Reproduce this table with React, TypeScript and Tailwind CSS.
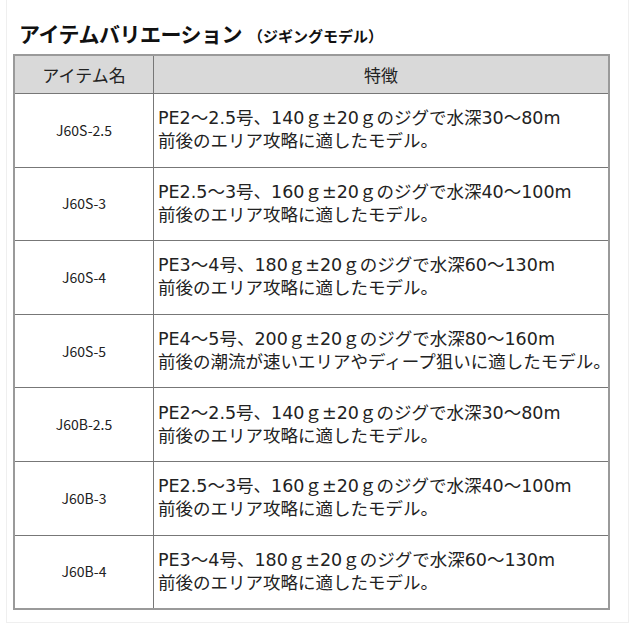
const rows = [
  { name: "J60S-2.5", l1: "PE2～2.5号、140ｇ±20ｇのジグで水深30～80m", l2: "前後のエリア攻略に適したモデル。" },
  { name: "J60S-3", l1: "PE2.5～3号、160ｇ±20ｇのジグで水深40～100m", l2: "前後のエリア攻略に適したモデル。" },
  { name: "J60S-4", l1: "PE3～4号、180ｇ±20ｇのジグで水深60～130m", l2: "前後のエリア攻略に適したモデル。" },
  { name: "J60S-5", l1: "PE4～5号、200ｇ±20ｇのジグで水深80～160m", l2: "前後の潮流が速いエリアやディープ狙いに適したモデル。" },
  { name: "J60B-2.5", l1: "PE2～2.5号、140ｇ±20ｇのジグで水深30～80m", l2: "前後のエリア攻略に適したモデル。" },
  { name: "J60B-3", l1: "PE2.5～3号、160ｇ±20ｇのジグで水深40～100m", l2: "前後のエリア攻略に適したモデル。" },
  { name: "J60B-4", l1: "PE3～4号、180ｇ±20ｇのジグで水深60～130m", l2: "前後のエリア攻略に適したモデル。" },
];

export default function App() {
  return (
    <div className="w-[630px] h-[630px] bg-white overflow-hidden font-['Noto_Sans_CJK_JP',sans-serif] text-[#222]">
      {/* faint outer frame */}
      <div className="ml-[6px] w-[623px] h-[623px] border-l border-r border-b border-[#efefef] pt-[18px] pl-[6px]">
        <h1 className="flex items-baseline h-[36px] pl-[6px] font-bold text-[#111]">
          <span className="text-[21px] tracking-[-0.5px]">アイテムバリエーション</span>
          <span className="text-[15px] ml-[6px]">（ジギングモデル）</span>
        </h1>

        <div className="w-[597px] border-2 border-[#9a9a9a]">
          {/* header */}
          <div className="grid grid-cols-[139px_1fr] h-[37px] bg-[#d9d9d9] text-[17px] text-[#222]">
            <div className="flex items-center justify-center border-r border-[#777]">アイテム名</div>
            <div className="flex items-center justify-center">特徴</div>
          </div>

          {rows.map((r) => (
            <div key={r.name} className="grid grid-cols-[139px_1fr] h-[73.6px] border-t border-[#777]">
              <div className="flex items-center justify-center border-r border-[#777] text-[14px] text-[#222]">
                {r.name}
              </div>
              <div className="flex flex-col justify-center pl-[4px] text-[17.5px] leading-[23px] whitespace-nowrap text-[#222] font-['DejaVu_Sans','Noto_Sans_CJK_JP',sans-serif]">
                <div>{r.l1}</div>
                <div>{r.l2}</div>
              </div>
            </div>
          ))}
        </div>
      </div>
    </div>
  );
}
